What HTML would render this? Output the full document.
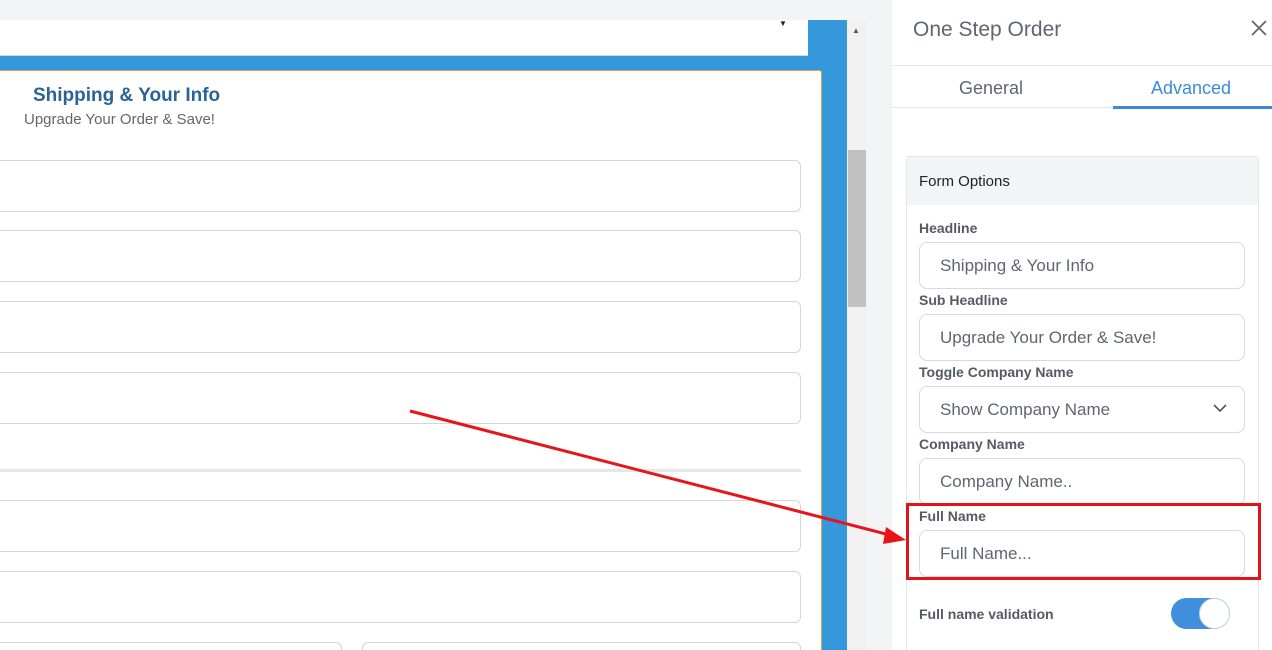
<!DOCTYPE html>
<html style="width:1272px;height:650px;overflow:hidden"><head><style>
*{box-sizing:border-box;margin:0;padding:0}
body{width:1272px;height:650px;overflow:hidden;background:#f3f4f6;position:relative;font-family:"Liberation Sans",sans-serif}
.a{position:absolute}
.fi{position:absolute;left:0;width:801px;height:52px;border:1px solid #d6d6d6;border-left:none;border-radius:0 6px 6px 0;background:#fff}
.lbl{position:absolute;left:919px;font-size:14px;font-weight:bold;color:#555b63}
.inp{position:absolute;left:919px;width:326px;height:47px;border:1px solid #d7d9dd;border-radius:8px;background:#fff;font-size:17px;color:#5f6670;padding:13px 0 0 20px}
</style></head><body>
<div class="a" style="left:808px;top:20px;width:39px;height:630px;background:#3498db"></div>
<div class="a" style="left:0;top:56px;width:847px;height:14px;background:#3498db"></div>
<div class="a" style="left:0;top:20px;width:808px;height:36px;background:#fff;border-bottom:1px solid #cfd8e0"></div>
<div class="a" style="left:779px;top:19px;font-size:8px;color:#222">▼</div>
<div class="a" style="left:0;top:70px;width:822px;height:580px;background:#fff;border:1px solid #e0a050;border-left:none;border-bottom:none;border-radius:0 3px 0 0"></div>
<div class="a" style="left:33px;top:85px;font-size:19px;font-weight:bold;color:#2a6496">Shipping &amp; Your Info</div>
<div class="a" style="left:24px;top:111px;font-size:15px;color:#666">Upgrade Your Order &amp; Save!</div>
<div class="fi" style="top:160px"></div>
<div class="fi" style="top:230px"></div>
<div class="fi" style="top:301px"></div>
<div class="fi" style="top:372px"></div>
<div class="a" style="left:0;top:469px;width:801px;height:3px;background:#e6e7eb"></div>
<div class="fi" style="top:500px"></div>
<div class="fi" style="top:571px"></div>
<div class="fi" style="top:642px;width:342px;height:8px;border-bottom:none;border-radius:0 6px 0 0"></div>
<div class="a" style="left:362px;top:642px;width:439px;height:8px;border:1px solid #d6d6d6;border-bottom:none;border-radius:6px 6px 0 0;background:#fff"></div>
<div class="a" style="left:847px;top:20px;width:20px;height:630px;background:#f1f1f1"></div>
<div class="a" style="left:852px;top:26px;font-size:8px;color:#555">▲</div>
<div class="a" style="left:848px;top:150px;width:18px;height:157px;background:#c1c1c1"></div>
<div class="a" style="left:867px;top:0;width:25px;height:650px;background:#f3f4f6"></div>
<div class="a" style="left:892px;top:0;width:380px;height:650px;background:#fff"></div>
<div class="a" style="left:913px;top:18px;font-size:21px;color:#5f6670">One Step Order</div>
<svg class="a" style="left:1251px;top:20px" width="16" height="16"><path d="M1 1L15 15M15 1L1 15" stroke="#666" stroke-width="1.8"/></svg>
<div class="a" style="left:892px;top:65px;width:380px;height:1px;background:#e3e5e8"></div>
<div class="a" style="left:959px;top:78px;font-size:18px;color:#5f6670">General</div>
<div class="a" style="left:1151px;top:78px;font-size:18px;color:#3b8ad9">Advanced</div>
<div class="a" style="left:892px;top:107px;width:380px;height:1px;background:#e3e5e8"></div>
<div class="a" style="left:1113px;top:106px;width:159px;height:3px;background:#3b8ad9"></div>
<div class="a" style="left:906px;top:156px;width:353px;height:500px;border:1px solid #e3e5e8;border-radius:3px"></div>
<div class="a" style="left:907px;top:157px;width:351px;height:48px;background:#f3f4f6"></div>
<div class="a" style="left:919px;top:173px;font-size:15px;color:#222">Form Options</div>
<div class="lbl" style="top:220px">Headline</div>
<div class="inp" style="top:242px">Shipping &amp; Your Info</div>
<div class="lbl" style="top:292px">Sub Headline</div>
<div class="inp" style="top:314px">Upgrade Your Order &amp; Save!</div>
<div class="lbl" style="top:364px">Toggle Company Name</div>
<div class="inp" style="top:386px">Show Company Name</div>
<svg class="a" style="left:1213px;top:403px" width="14" height="10"><path d="M1 2l6 6 6-6" fill="none" stroke="#555" stroke-width="1.6"/></svg>
<div class="lbl" style="top:436px">Company Name</div>
<div class="inp" style="top:458px">Company Name..</div>
<div class="lbl" style="top:508px">Full Name</div>
<div class="inp" style="top:530px">Full Name...</div>
<div class="a" style="left:906px;top:503px;width:355px;height:77px;border:3px solid #e0141a"></div>
<div class="lbl" style="top:606px">Full name validation</div>
<div class="a" style="left:1171px;top:598px;width:59px;height:31px;border-radius:16px;background:#3f8fdc"></div>
<div class="a" style="left:1199px;top:598px;width:31px;height:31px;border-radius:50%;background:#fff;border:1px solid #d0d4d8"></div>
<svg class="a" style="left:0;top:0" width="1272" height="650"><line x1="410" y1="411" x2="890" y2="535" stroke="#e8141a" stroke-width="3"/><polygon points="906,540 886,527 883,544" fill="#e8141a"/></svg>
</body></html>
